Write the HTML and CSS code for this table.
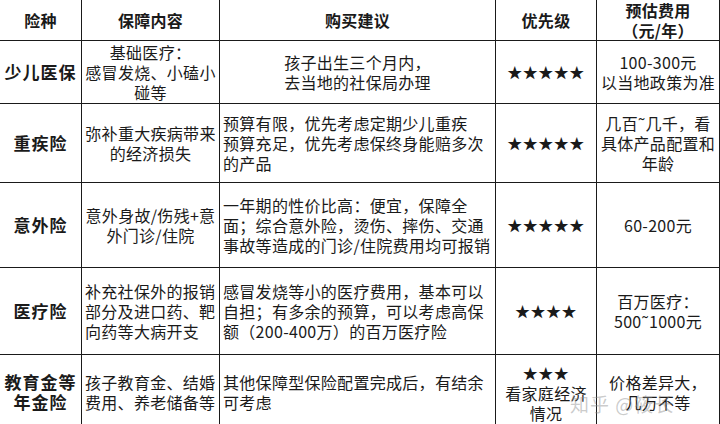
FILE: index.html
```html
<!DOCTYPE html>
<html lang="zh-CN">
<head>
<meta charset="utf-8">
<title>儿童保险配置</title>
<link rel="stylesheet" href="styles.css">
</head>
<body>
<div class="page">
  <div class="table">
    <div class="cell head"><div>险种</div></div>
    <div class="cell head"><div>保障内容</div></div>
    <div class="cell head"><div>购买建议</div></div>
    <div class="cell head"><div>优先级</div></div>
    <div class="cell head"><div>预估费用<br>（元/年）</div></div>

    <div class="cell kind"><div>少儿医保</div></div>
    <div class="cell"><div>基础医疗：<br>感冒发烧、小磕小<br>碰等</div></div>
    <div class="cell"><div>孩子出生三个月内，<br>去当地的社保局办理</div></div>
    <div class="cell stars"><div>★★★★★</div></div>
    <div class="cell"><div>100-300元<br>以当地政策为准</div></div>

    <div class="cell kind"><div>重疾险</div></div>
    <div class="cell"><div>弥补重大疾病带来<br>的经济损失</div></div>
    <div class="cell left"><div>预算有限，优先考虑定期少儿重疾<br>预算充足，优先考虑保终身能赔多次<br>的产品</div></div>
    <div class="cell stars"><div>★★★★★</div></div>
    <div class="cell"><div>几百˜几千，看<br>具体产品配置和<br>年龄</div></div>

    <div class="cell kind"><div>意外险</div></div>
    <div class="cell"><div>意外身故/伤残+意<br>外门诊/住院</div></div>
    <div class="cell left"><div>一年期的性价比高：便宜，保障全<br>面；综合意外险，烫伤、摔伤、交通<br>事故等造成的门诊/住院费用均可报销</div></div>
    <div class="cell stars"><div>★★★★★</div></div>
    <div class="cell"><div>60-200元</div></div>

    <div class="cell kind"><div>医疗险</div></div>
    <div class="cell left"><div>补充社保外的报销<br>部分及进口药、靶<br>向药等大病开支</div></div>
    <div class="cell left"><div>感冒发烧等小的医疗费用，基本可以<br>自担；有多余的预算，可以考虑高保<br>额（200-400万）的百万医疗险</div></div>
    <div class="cell stars"><div>★★★★</div></div>
    <div class="cell"><div>百万医疗：<br>500˜1000元</div></div>

    <div class="cell kind nb"><div>教育金等<br>年金险</div></div>
    <div class="cell left nb"><div>孩子教育金、结婚<br>费用、养老储备等</div></div>
    <div class="cell left nb"><div>其他保障型保险配置完成后，有结余<br>可考虑</div></div>
    <div class="cell nb"><div><span class="star-line">★★★</span><br>看家庭经济<br>情况</div></div>
    <div class="cell nb"><div>价格差异大，<br>几万不等</div></div>
  </div>
  <div class="watermark">知乎 @筱长</div>
</div>
</body>
</html>
```

FILE: styles.css
```css
html, body {
  margin: 0;
  padding: 0;
  background: #ffffff;
}
body {
  width: 720px;
  height: 424px;
  overflow: hidden;
}
.page {
  position: relative;
  width: 720px;
  height: 424px;
  overflow: hidden;
  font-family: "Noto Sans CJK SC", "Noto Sans", sans-serif;
  color: #1a1a1a;
}
.table {
  display: grid;
  grid-template-columns: 82px 138px 276px 101px 123px;
  grid-template-rows: 41px 63px 79px 85px 87px 74px;
}
.cell {
  box-sizing: border-box;
  border-right: 1px solid #1a1a1a;
  border-bottom: 1px solid #1a1a1a;
  display: flex;
  justify-content: center;
  align-items: center;
  text-align: center;
  font-size: 16px;
  line-height: 20px;
  letter-spacing: 0.3px;
  white-space: nowrap;
  padding: 0 2px;
}
.cell.left {
  justify-content: flex-start;
  text-align: left;
  padding-left: 3px;
}
.cell.nb {
  border-bottom: none;
}
.head {
  font-weight: bold;
}
.kind {
  font-weight: bold;
  font-size: 17px;
  letter-spacing: 1px;
}
.stars {
  font-size: 15px;
  letter-spacing: 0.5px;
}
.star-line {
  font-size: 15px;
  letter-spacing: 0.5px;
}
.watermark {
  position: absolute;
  left: 570px;
  top: 390px;
  font-size: 19px;
  letter-spacing: 1px;
  color: rgba(140, 140, 140, 0.45);
  white-space: nowrap;
}
```
